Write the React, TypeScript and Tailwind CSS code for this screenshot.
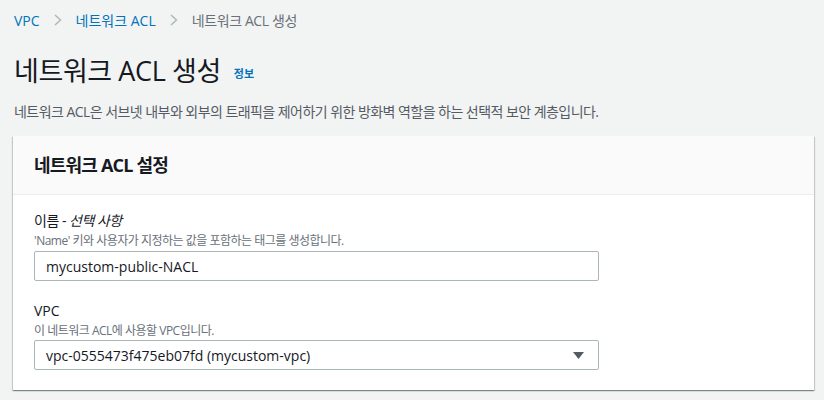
import React from 'react';

const font = { fontFamily: '"Open Sans", "Noto Sans CJK KR", sans-serif' };

function Chevron() {
  return (
    <svg width="8" height="12" viewBox="0 0 8 12" className="mx-[14px]">
      <path d="M1 1l5.5 5L1 11" fill="none" stroke="#aab7b8" strokeWidth="1.4" />
    </svg>
  );
}

export default function App() {
  return (
    <div className="h-[400px] w-[824px] overflow-hidden bg-[#f2f3f3] text-[#16191f]" style={font}>
      <div className="flex h-[40px] items-center pl-[14px] text-[14px]">
        <span className="text-[#0073bb]">VPC</span>
        <Chevron />
        <span className="text-[#0073bb]">네트워크 ACL</span>
        <Chevron />
        <span className="tracking-[-0.4px] text-[#687078]">네트워크 ACL 생성</span>
      </div>

      <div className="mt-[11px] flex h-[40px] items-center pl-[14px]">
        <h1 className="text-[27px] leading-[40px] font-normal tracking-[-0.4px]">네트워크 ACL 생성</h1>
        <span className="ml-[13px] mt-[6px] text-[11px] font-bold text-[#0073bb]">정보</span>
      </div>

      <p className="mt-[11px] h-[20px] pl-[14px] text-[14px] leading-[20px] tracking-[-0.55px] text-[#545b64]">
        네트워크 ACL은 서브넷 내부와 외부의 트래픽을 제어하기 위한 방화벽 역할을 하는 선택적 보안 계층입니다.
      </p>

      <div className="ml-[13px] mt-[14px] w-[801px] bg-white shadow-[0_1px_1px_0_rgba(0,28,36,0.3),1px_1px_1px_0_rgba(0,28,36,0.15),-1px_1px_1px_0_rgba(0,28,36,0.15)]">
        <div className="flex h-[59px] items-center border-b border-[#eaeded] bg-[#fafafa] px-[21px]">
          <h2 className="text-[18px] font-bold tracking-[-0.8px]">네트워크 ACL 설정</h2>
        </div>

        <div className="px-[21px] pt-[16px] pb-[20px]">
          <div className="text-[14px] leading-[20px] tracking-[-0.5px]">
            이름 - <i>선택 사항</i>
          </div>
          <div className="mt-[2px] text-[12px] leading-[16px] tracking-[-0.5px] text-[#687078]">
            'Name' 키와 사용자가 지정하는 값을 포함하는 태그를 생성합니다.
          </div>
          <div className="mt-[2px] flex h-[30px] w-[565px] items-center rounded-[2px] border border-[#aab7b8] px-[11px] text-[14px]">
            mycustom-public-NACL
          </div>

          <div className="mt-[20px] text-[14px] leading-[20px]">VPC</div>
          <div className="mt-[2px] text-[12px] leading-[16px] tracking-[-0.5px] text-[#687078]">
            이 네트워크 ACL에 사용할 VPC입니다.
          </div>
          <div className="mt-[1px] flex h-[30px] w-[565px] items-center justify-between rounded-[2px] border border-[#aab7b8] pl-[11px] pr-[14px] text-[14px]">
            <span>vpc-0555473f475eb07fd (mycustom-vpc)</span>
            <svg width="11" height="7" viewBox="0 0 11 7">
              <path d="M0 0h11L5.5 7z" fill="#545b64" />
            </svg>
          </div>
        </div>
      </div>
    </div>
  );
}
